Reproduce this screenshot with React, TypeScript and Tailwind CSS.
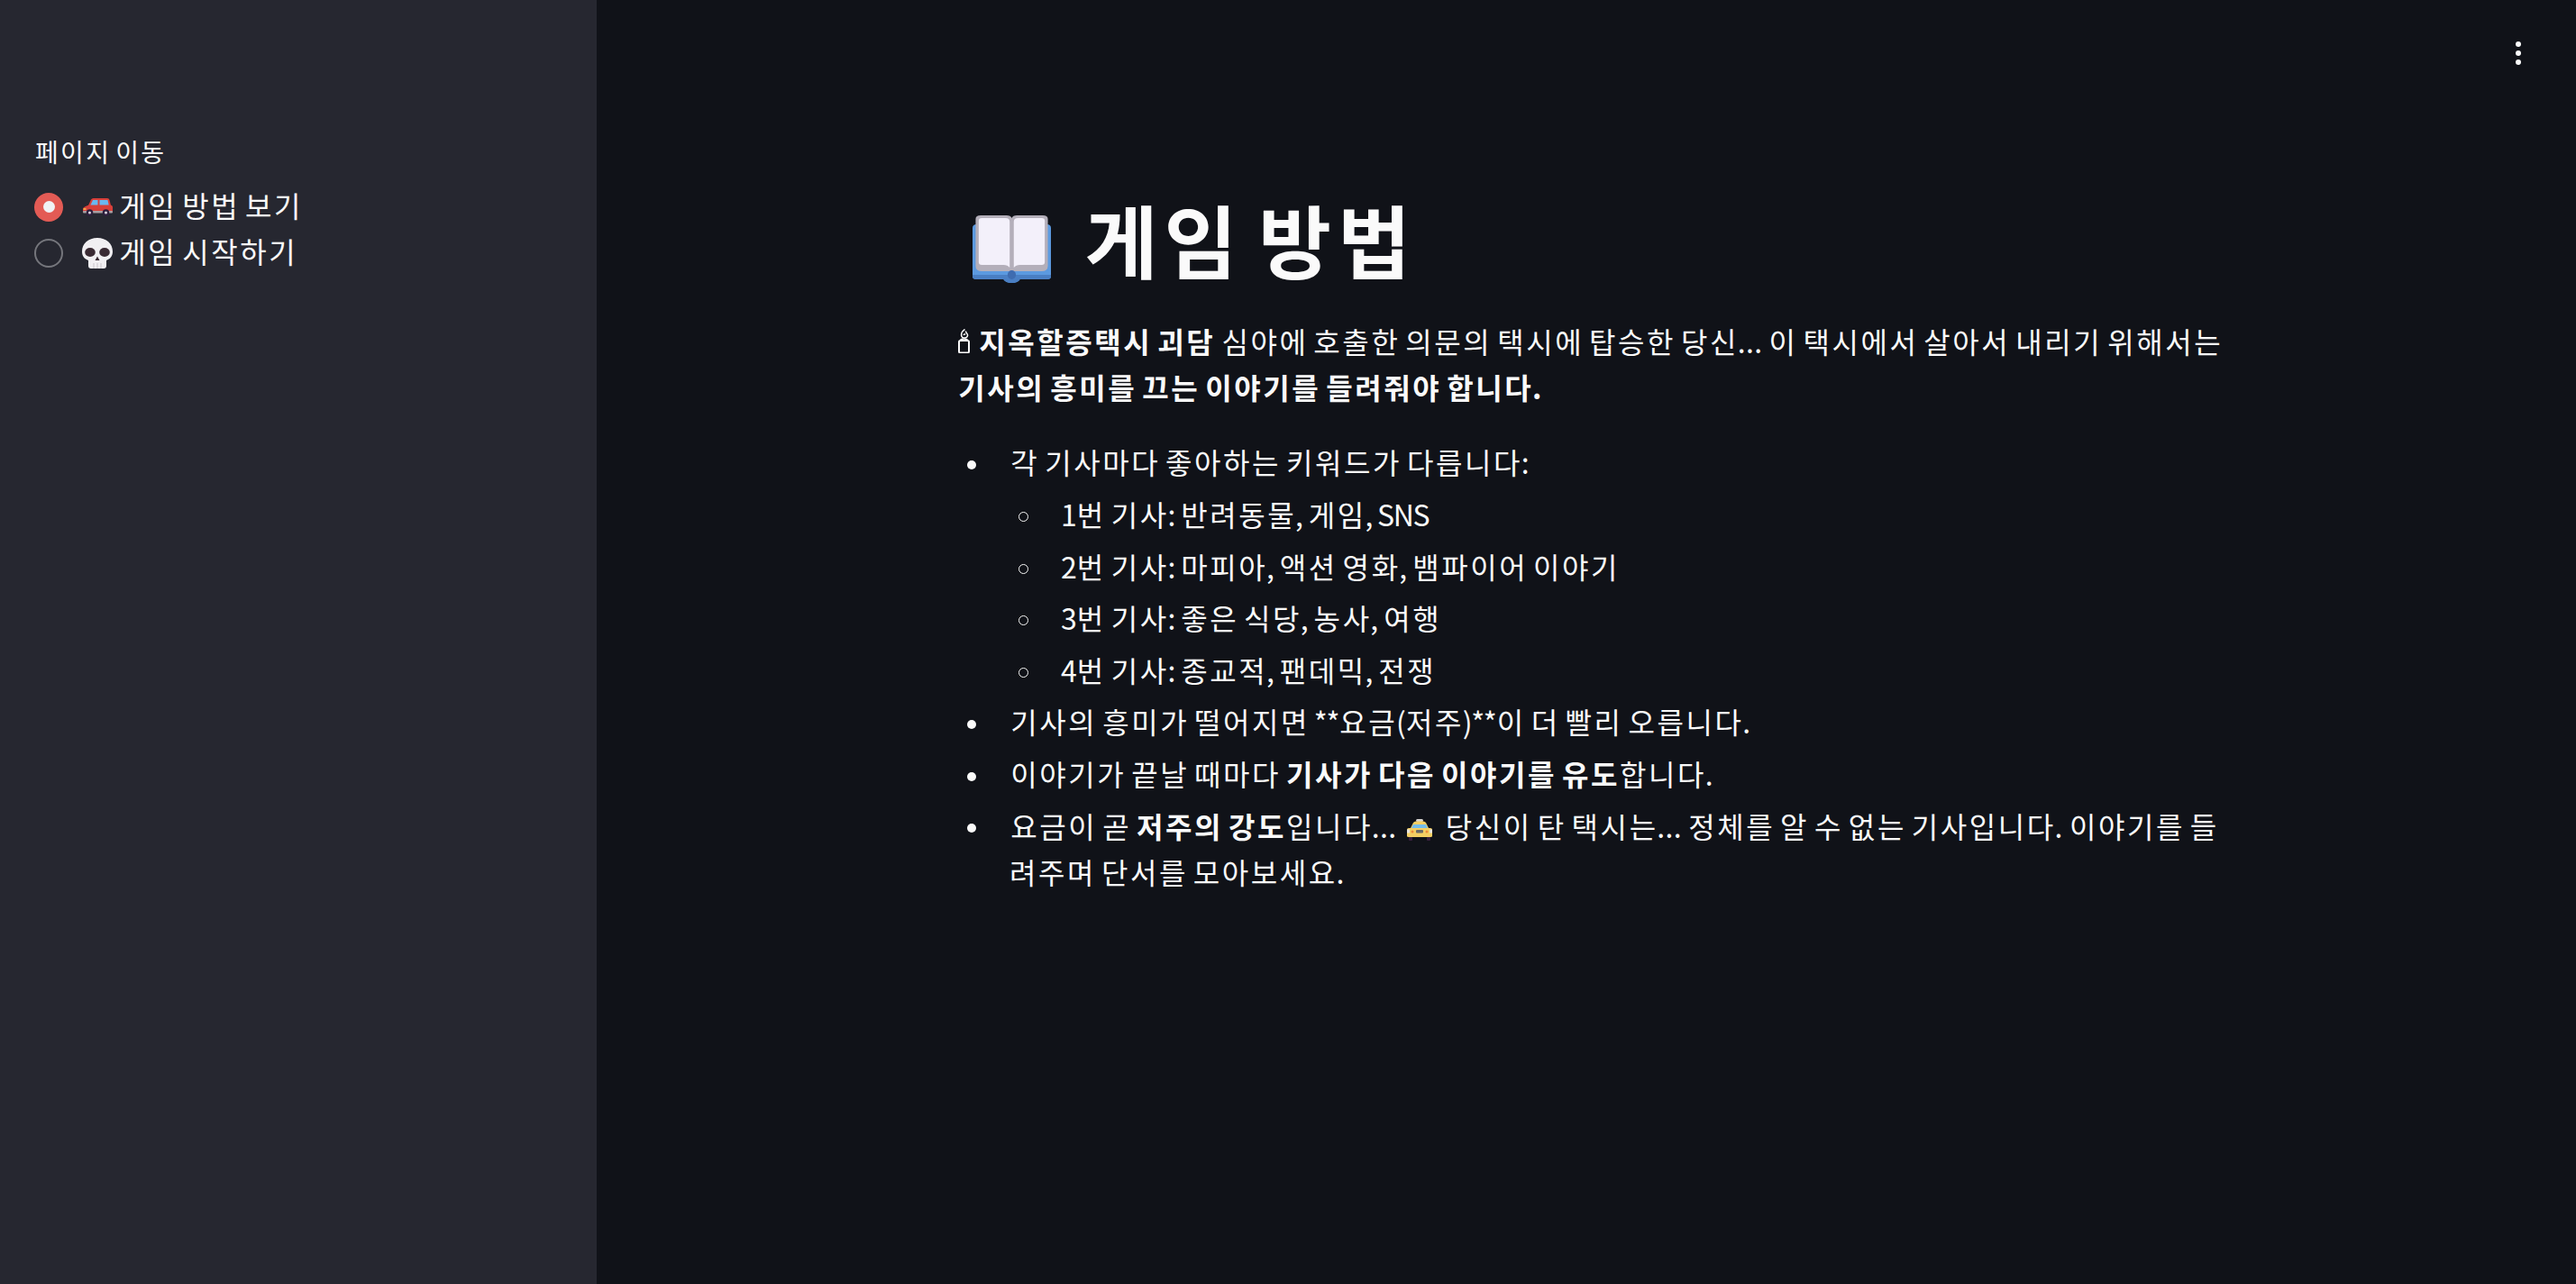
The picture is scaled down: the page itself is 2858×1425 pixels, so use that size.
import type { ReactNode } from "react";

const fontStack = '"Noto Sans CJK KR", "Noto Sans", sans-serif';

// Hangul sits centred on a full-em advance in the picture, latin runs are tighter
function Ko({ text }: { text: string }) {
  return (
    <>
      {text.split(/([가-힣]+|\.+)/).map((part, i) => {
        if (part === "") return null;
        if (/[가-힣]/.test(part)) {
          return (
            <span key={i} className="ml-[0.04em]">
              <span className="tracking-[0.08em]">{part.slice(0, -1)}</span>
              <span className="tracking-[0.04em]">{part.slice(-1)}</span>
            </span>
          );
        }
        return (
          <span key={i} className={part.startsWith(".") ? "tracking-[0.01em]" : "tracking-[-0.04em]"}>
            {part}
          </span>
        );
      })}
    </>
  );
}

function CarEmoji() {
  return (
    <svg viewBox="0 0 33 21" className="h-[21px] w-[33px]">
      <path d="M6 9L9 2.500Q9.800 1 11.500 1H27Q29 1 29.500 3L31 9Z" fill="#d8403a" />
      <path d="M11 3H16.500V9H8.300Z" fill="#6bb8f0" />
      <path d="M18.500 3H27.500L28.800 9H18.500Z" fill="#6bb8f0" />
      <path d="M3 10Q5 8.500 8 8.500H30Q33 8.500 33 11V16H0V13Q0 11 3 10Z" fill="#d8403a" />
      <rect x="0" y="15" width="33" height="2.500" rx="1" fill="#a79fa3" />
      <rect x="0.500" y="12" width="3" height="2" fill="#f0a848" />
      <circle cx="7.500" cy="17" r="3.800" fill="#2e1f3d" />
      <circle cx="7.500" cy="17" r="1.500" fill="#d8d4dc" />
      <circle cx="25.500" cy="17" r="3.800" fill="#2e1f3d" />
      <circle cx="25.500" cy="17" r="1.500" fill="#d8d4dc" />
    </svg>
  );
}

function SkullEmoji() {
  return (
    <svg viewBox="0 0 34 34" className="h-[34px] w-[34px]">
      <path d="M17 0C7 0 0 6.500 0 15C0 20.500 3 23.500 7 25V31Q7 34 10 34H24Q27 34 27 31V25C31 23.500 34 20.500 34 15C34 6.500 27 0 17 0Z" fill="#f1eff2" />
      <ellipse cx="9" cy="16" rx="5.800" ry="5" fill="#3a2a33" />
      <ellipse cx="25" cy="16" rx="5.800" ry="5" fill="#3a2a33" />
      <path d="M17 20.500L19.500 25H14.500Z" fill="#3a2a33" />
      <path d="M13 28V34M17 28V34M21 28V34" stroke="#c9c4ca" strokeWidth="1" />
    </svg>
  );
}

function BookEmoji() {
  return (
    <svg viewBox="0 0 76 75" preserveAspectRatio="none" className="h-[75px] w-[87px]">
      <path d="M0 14Q0 10 4 10H72Q76 10 76 14V68Q76 71 72 71H46Q44 75 38 75Q32 75 30 71H4Q0 71 0 68Z" fill="#5c9ae0" />
      <path d="M0 66H76V68Q76 71 72 71H46Q44 75 38 75Q32 75 30 71H4Q0 71 0 68Z" fill="#4a7fc4" />
      <path d="M3 4Q3 0 8 0H33Q37 0 38 3Q39 0 43 0H68Q73 0 73 4V56Q73 62 67 62H9Q3 62 3 56Z" fill="#b4afba" />
      <path d="M6 6Q6 3 9 3H32Q36 3 36 7V58Q34 55 30 55H9Q6 55 6 52Z" fill="#f3f0fa" />
      <path d="M40 7Q40 3 44 3H67Q70 3 70 6V52Q70 55 67 55H46Q42 55 40 58Z" fill="#f3f0fa" />
      <ellipse cx="38" cy="66" rx="4" ry="5" fill="#3f6cb0" />
    </svg>
  );
}

function TaxiEmoji() {
  return (
    <svg viewBox="0 0 28 24" className="h-[24px] w-[28px]">
      <rect x="10" y="0" width="8" height="3" rx="1.500" fill="#d9d5d0" />
      <path d="M7 4Q8 2.500 10 2.500H18Q20 2.500 21 4L24 10H4Z" fill="#f5cf63" />
      <path d="M7 6H21L23 10H5Z" fill="#74bdea" />
      <path d="M2 10H26Q28 10 28 12V19Q28 20 26 20H2Q0 20 0 19V12Q0 10 2 10Z" fill="#f5cf63" />
      <rect x="0" y="11.500" width="3" height="4" fill="#e8e4dc" />
      <rect x="25" y="11.500" width="3" height="4" fill="#e8e4dc" />
      <circle cx="6" cy="14" r="1.500" fill="#ee8a3a" />
      <circle cx="22" cy="14" r="1.500" fill="#ee8a3a" />
      <rect x="10" y="12" width="8" height="3.500" rx="1" fill="#6b6a68" />
      <rect x="2" y="20" width="4" height="4" rx="1" fill="#38203f" />
      <rect x="22" y="20" width="4" height="4" rx="1" fill="#38203f" />
    </svg>
  );
}

function CandleGlyph() {
  return (
    <svg viewBox="0 0 15 27" className="h-[27px] w-[15px]" fill="none" stroke="#fafafa">
      <path d="M8.500 0.500C5 3 4 6 5 8.500C6 11 11 10.500 11.500 7.500C12 5 9.500 5 9.500 2.500M7 7Q8 5 9 6.500" strokeWidth="1.500" />
      <rect x="2" y="13" width="11" height="13.500" rx="1.500" strokeWidth="2" />
      <path d="M3.500 12Q7.500 10 11.500 12" strokeWidth="1.500" />
    </svg>
  );
}

function Item({ children }: { children: ReactNode }) {
  return (
    <li className="mt-[6.400px] flex first:mt-0">
      <span className="flex h-[51.200px] w-[58px] shrink-0 items-center pl-[11px] pt-[6px]">
        <span className="h-[10px] w-[10px] rounded-full bg-[#fafafa]" />
      </span>
      <div className="min-w-0 flex-1">{children}</div>
    </li>
  );
}

function SubItem({ children }: { children: ReactNode }) {
  return (
    <li className="mt-[6.400px] flex first:mt-0">
      <span className="flex h-[51.200px] w-[57px] shrink-0 items-center pl-[10px] pt-[6px]">
        <span className="h-[11px] w-[11px] rounded-full border-[1.500px] border-[#fafafa]" />
      </span>
      <div className="whitespace-nowrap">{children}</div>
    </li>
  );
}

const drivers = [
  "1번 기사: 반려동물, 게임, SNS",
  "2번 기사: 마피아, 액션 영화, 뱀파이어 이야기",
  "3번 기사: 좋은 식당, 농사, 여행",
  "4번 기사: 종교적, 팬데믹, 전쟁",
];

export default function App() {
  return (
    <div
      className="flex h-screen overflow-hidden bg-[#101218] text-[#fafafa]"
      style={{ fontFamily: fontStack }}
    >
      <aside className="w-[662px] shrink-0 bg-[#262730] px-[38px] pt-[148px]">
        <div className="whitespace-nowrap text-[28px] leading-[40px]">
          <Ko text="페이지 이동" />
        </div>
        <div className="mt-[16px] flex flex-col text-[32px] leading-[51px]">
          <label className="flex h-[51px] items-center">
            <span className="flex h-[32px] w-[32px] items-center justify-center rounded-full bg-[#e35b55]">
              <span className="h-[13px] w-[13px] rounded-full bg-[#f0f2f6]" />
            </span>
            <span className="ml-[22px] flex w-[39px] items-center">
              <CarEmoji />
            </span>
            <span className="mb-[4px] whitespace-nowrap">
              <Ko text="게임 방법 보기" />
            </span>
          </label>
          <label className="flex h-[51px] items-center">
            <span className="h-[32px] w-[32px] rounded-full border-2 border-[#75767c]" />
            <span className="ml-[21px] flex w-[40px] items-center">
              <SkullEmoji />
            </span>
            <span className="mb-[4px] whitespace-nowrap">
              <Ko text="게임 시작하기" />
            </span>
          </label>
        </div>
      </aside>

      <main className="min-w-0 flex-1">
        <div className="flex h-[206px] justify-end pr-[61px] pt-[39px]">
          <div className="flex h-[40px] flex-col justify-center gap-[4px]">
            <span className="h-[6px] w-[6px] rounded-full bg-[#fafafa]" />
            <span className="h-[6px] w-[6px] rounded-full bg-[#fafafa]" />
            <span className="h-[6px] w-[6px] rounded-full bg-[#fafafa]" />
          </div>
        </div>

        <div className="ml-[400px] w-[1408px] text-[32px] leading-[51.2px]">
          <h1 className="flex h-[116px] items-center text-[88px] font-bold leading-[116px]">
            <span className="ml-[17px] mr-[34px] mt-[24px] flex items-center">
              <BookEmoji />
            </span>
            <span className="whitespace-nowrap">
              <Ko text="게임 방법" />
            </span>
          </h1>
          <p className="mt-[31px]">
            <span className="mr-[8px] inline-block">
              <CandleGlyph />
            </span>
            <strong className="font-bold">
              <Ko text="지옥할증택시 괴담" />
            </strong>{" "}
            <Ko text="심야에 호출한 의문의 택시에 탑승한 당신... 이 택시에서 살아서 내리기 위해서는" />{" "}
            <strong className="font-bold">
              <Ko text="기사의 흥미를 끄는 이야기를 들려줘야 합니다." />
            </strong>
          </p>
          <ul className="mt-[32px]">
            <Item>
              <Ko text="각 기사마다 좋아하는 키워드가 다릅니다:" />
              <ul className="mt-[6.400px]">
                {drivers.map((d) => (
                  <SubItem key={d}>
                    <Ko text={d} />
                  </SubItem>
                ))}
              </ul>
            </Item>
            <Item>
              <Ko text="기사의 흥미가 떨어지면 **요금(저주)**이 더 빨리 오릅니다." />
            </Item>
            <Item>
              <Ko text="이야기가 끝날 때마다 " />
              <strong className="font-bold">
                <Ko text="기사가 다음 이야기를 유도" />
              </strong>
              <Ko text="합니다." />
            </Item>
            <Item>
              <Ko text="요금이 곧 " />
              <strong className="font-bold">
                <Ko text="저주의 강도" />
              </strong>
              <Ko text="입니다... " />
              <span className="mx-[6px] inline-block align-[-3px]">
                <TaxiEmoji />
              </span>{" "}
              <Ko text="당신이 탄 택시는... 정체를 알 수 없는 기사입니다. 이야기를 들려주며 단서를 모아보세요." />
            </Item>
          </ul>
        </div>
      </main>
    </div>
  );
}
